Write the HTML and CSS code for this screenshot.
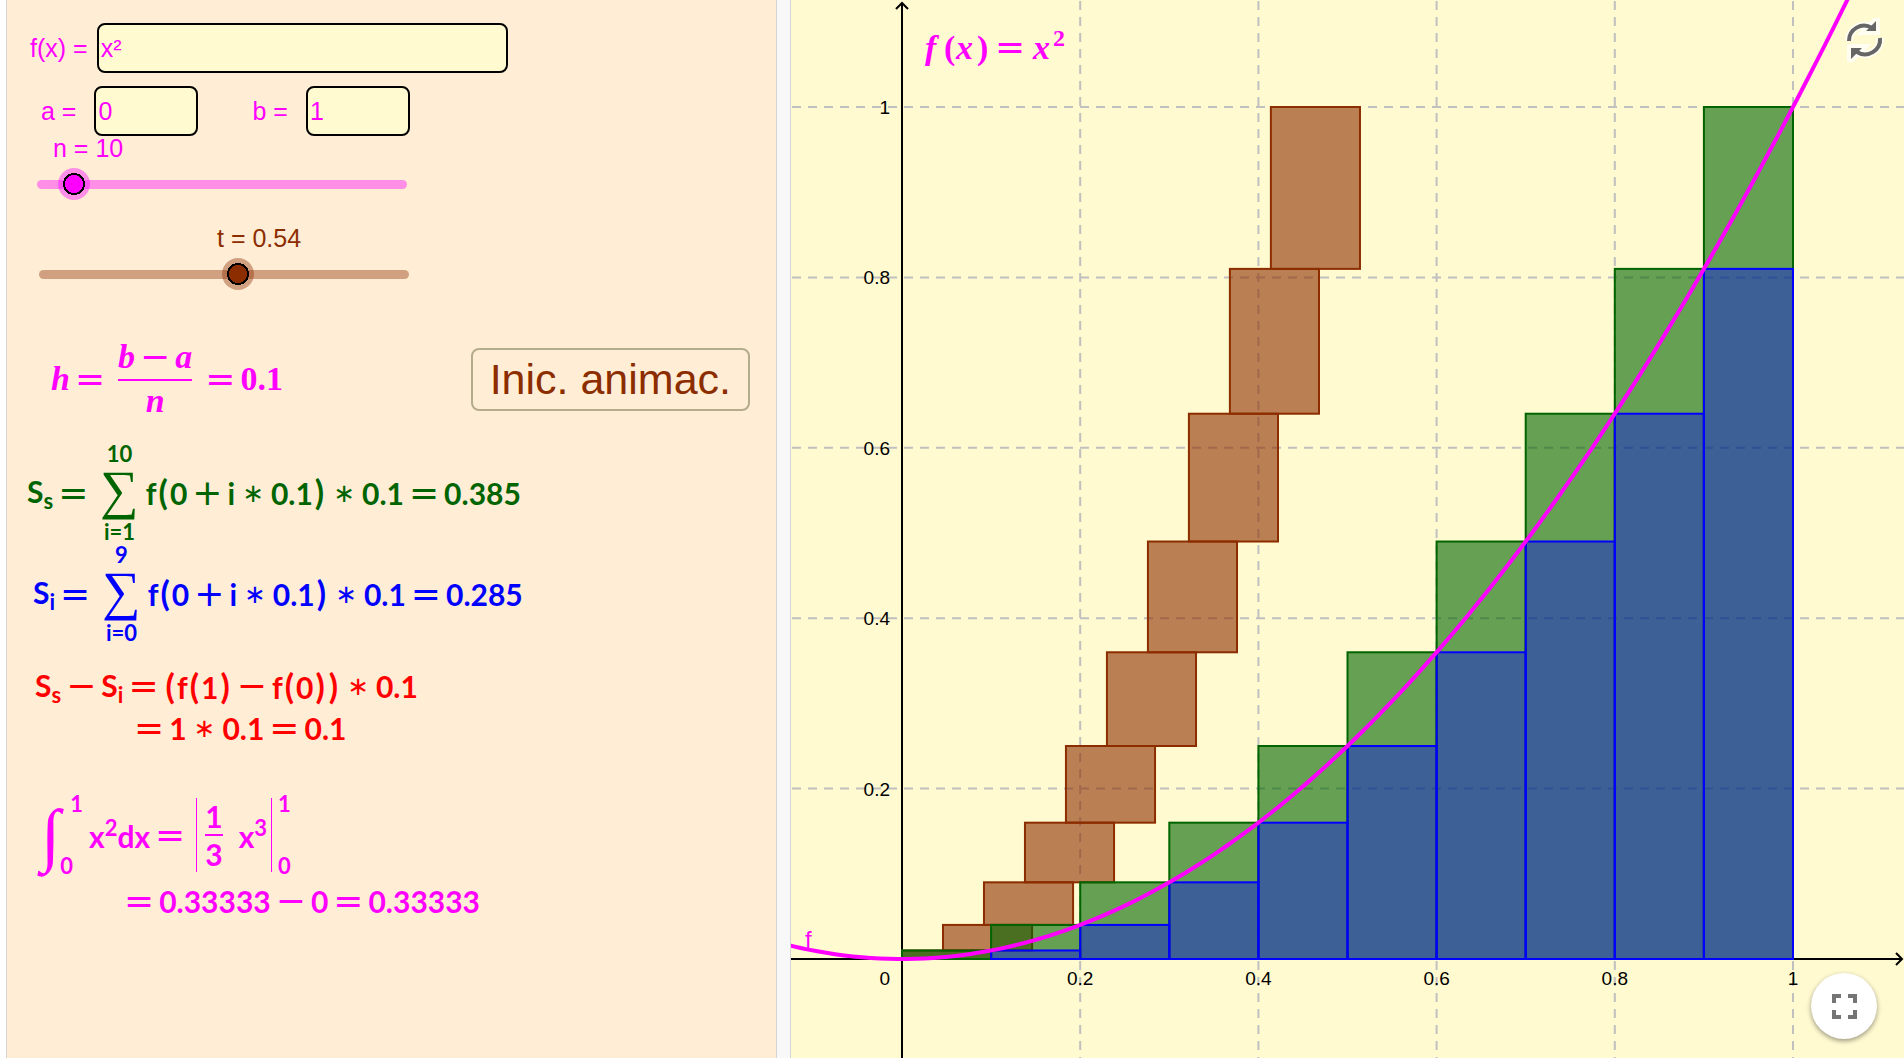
FILE: index.html
```html
<!DOCTYPE html>
<html lang="es">
<head>
    <meta charset="UTF-8">
    <meta name="viewport" content="width=device-width, initial-scale=1.0">
    <title>Sumas de Riemann</title>
    <link rel="stylesheet" href="styles.css">
</head>
<body>

<main class="applet">
    <section class="controls">
        <div class="row row-f">
            <label for="fx">f(x) =</label>
            <input type="text" id="fx" class="wide" value="x²">
        </div>
        <div class="row row-ab">
            <label for="a">a =</label>
            <input type="text" id="a" value="0">
            <label for="b" class="label-b">b =</label>
            <input type="text" id="b" value="1">
        </div>

        <div class="slider magenta">
            <label for="n" id="nLabel">n = 10</label>
            <div class="track"><input type="range" id="n" min="1" max="100" value="10"></div>
        </div>
        <div class="slider brown">
            <label for="t" id="tLabel">t = 0.54</label>
            <div class="track"><input type="range" id="t" min="0" max="1" step="0.01" value="0.54"></div>
        </div>

        <div class="step">
            <div class="math serif magenta">
                <i>h</i><span class="op">=</span>
                <span class="frac"><span><i>b</i><span class="op">−</span><i>a</i></span><i>n</i></span>
                <span class="op">=</span><span>0.1</span>
            </div>
            <button type="button" id="play">Inic. animac.</button>
        </div>

        <div class="math sum green">
            <span>S<sub>s</sub></span><span class="op">=</span>
            <span class="sigma"><small>10</small><span class="big">∑</span><small>i=1</small></span>
            <span>f<span class="par">(</span>0</span><span class="op">+</span><span>i</span><span class="op star">∗</span><span>0.1<span class="par">)</span></span><span class="op star">∗</span><span>0.1</span><span class="op">=</span><span>0.385</span>
        </div>
        <div class="math sum blue">
            <span>S<sub>i</sub></span><span class="op">=</span>
            <span class="sigma"><small>9</small><span class="big">∑</span><small>i=0</small></span>
            <span>f<span class="par">(</span>0</span><span class="op">+</span><span>i</span><span class="op star">∗</span><span>0.1<span class="par">)</span></span><span class="op star">∗</span><span>0.1</span><span class="op">=</span><span>0.285</span>
        </div>

        <div class="difference red">
            <div class="math">
                <span>S<sub>s</sub></span><span class="op">−</span><span>S<sub>i</sub></span><span class="op">=</span><span><span class="par">(</span>f<span class="par">(</span>1<span class="par">)</span></span><span class="op">−</span><span>f<span class="par">(</span>0<span class="par">)</span><span class="par">)</span></span><span class="op star">∗</span><span>0.1</span>
            </div>
            <div class="math second">
                <span class="op">=</span><span>1</span><span class="op star">∗</span><span>0.1</span><span class="op">=</span><span>0.1</span>
            </div>
        </div>

        <div class="integral magenta">
            <div class="math">
                <span class="int">∫</span>
                <span class="limits inner"><small>1</small><small>0</small></span>
                <span>x<sup>2</sup>dx</span><span class="op">=</span>
                <span class="bars"><span class="frac"><span>1</span><span>3</span></span><span>x<sup>3</sup></span></span>
                <span class="limits outer"><small>1</small><small>0</small></span>
            </div>
            <div class="math second">
                <span class="op">=</span><span>0.33333</span><span class="op">−</span><span>0</span><span class="op">=</span><span>0.33333</span>
            </div>
        </div>
    </section>

    <section class="graph">
        <svg id="plot" viewBox="0 0 1113 1058">
            <g id="grid" class="grid"></g>
            <g class="axes">
                <path d="M0 959H1111M1105 953l6 6-6 6"/>
                <path d="M111 1058V3M105 9l6-6 6 6"/>
            </g>
            <g id="ticks" class="ticks"></g>
            <g id="moved" class="rect-brown"></g>
            <g id="upper" class="rect-green"></g>
            <g id="lower" class="rect-blue"></g>
            <path id="curve" class="curve"/>
            <text class="curve-name" x="14" y="948">f</text>
            <text class="formula" y="59"><tspan x="134" class="it">f</tspan><tspan x="153">(</tspan><tspan x="165" class="it">x</tspan><tspan x="186">)</tspan><tspan x="204" class="equals">=</tspan><tspan x="242" class="it">x</tspan><tspan x="262" y="46" class="exp">2</tspan></text>
        </svg>
        <button type="button" class="reset" id="reset" aria-label="Reiniciar">
            <svg viewBox="0 0 40 44">
                <g class="halo"><path d="M5 23A15 15 0 0 1 28 10"/><path d="M36 20A15 15 0 0 1 13 34"/><path d="M32 3V13H22zM7 41V30H18z"/></g>
                <g class="arrows"><path d="M5 23A15 15 0 0 1 28 10"/><path d="M36 20A15 15 0 0 1 13 34"/></g>
                <path class="heads" d="M32 3V13H22zM7 41V30H18z"/>
            </svg>
        </button>
        <button type="button" class="fullscreen" aria-label="Pantalla completa">
            <svg viewBox="0 0 25 25"><path d="M2 9V2H9M16 2H23V9M23 16V23H16M9 23H2V16"/></svg>
        </button>
    </section>
</main>

<script>
    // Position of the origin and pixels per unit inside the SVG
    const originX = 111, originY = 959;
    const unitX = 891, unitY = 852;

    const nInput = document.getElementById('n');
    const tInput = document.getElementById('t');

    function px(x) { return originX + x * unitX; }
    function py(y) { return originY - y * unitY; }
    function f(x) { return x * x; }

    function rect(x, width, from, to) {
        return `<rect x="${px(x)}" y="${py(to)}" width="${width * unitX}" height="${(to - from) * unitY}"/>`;
    }

    function drawGrid() {
        let lines = '';
        let ticks = `<text x="99" y="985" class="end">0</text>`;
        for (let i = 1; i <= 5; i++) {
            const v = i / 5;
            lines += `<path d="M${px(v)} 1V1058M1 ${py(v)}H1113"/>`;
            ticks += `<text x="${px(v)}" y="985" class="mid">${v}</text>`;
            ticks += `<text x="99" y="${py(v) + 7}" class="end">${v}</text>`;
        }
        document.getElementById('grid').innerHTML = lines;
        document.getElementById('ticks').innerHTML = ticks;

        let d = '';
        for (let x = -0.125; x < 1.1; x += 0.01) {
            d += (d ? 'L' : 'M') + px(x) + ' ' + py(f(x));
        }
        document.getElementById('curve').setAttribute('d', d);
    }

    // The label travels with the slider handle
    function placeLabel(id, text, ratio) {
        const label = document.getElementById(id);
        label.innerText = text;
        label.style.marginLeft = Math.round(ratio * 362 - 5) + 'px';
    }

    function draw() {
        const n = parseInt(nInput.value);
        const t = parseFloat(tInput.value);
        const h = 1 / n;
        let upper = '', lower = '', moved = '';
        for (let i = 0; i < n; i++) {
            const x = i * h;
            upper += rect(x, h, 0, f(x + h));
            lower += rect(x, h, 0, f(x));
            moved += rect(x * (1 - t), h, f(x), f(x + h));
        }
        document.getElementById('upper').innerHTML = upper;
        document.getElementById('lower').innerHTML = lower;
        document.getElementById('moved').innerHTML = moved;
        placeLabel('nLabel', 'n = ' + n, (n - 1) / 99);
        placeLabel('tLabel', 't = ' + t, t);
    }

    let timer = null;
    document.getElementById('play').onclick = function () {
        if (timer) {
            clearInterval(timer);
            timer = null;
            return;
        }
        timer = setInterval(function () {
            tInput.value = (parseFloat(tInput.value) + 0.01) % 1;
            draw();
        }, 50);
    };
    document.getElementById('reset').onclick = function () { location.reload(); };
    nInput.oninput = draw;
    tInput.oninput = draw;

    drawGrid();
    draw();
</script>
</body>
</html>
```
FILE: styles.css
```css
* {
    box-sizing: border-box;
}
body {
    margin: 0;
    background: #fff;
    font-family: "Liberation Sans", Arial, sans-serif;
}
.applet {
    display: grid;
    grid-template-columns: minmax(0, 771fr) minmax(0, 1114fr);
    gap: 13px;
    min-height: 100vh;
    margin-left: 6px;
    background: #f8f8f8;
}
.magenta { color: #ff00ff; }
.brown { color: #8c2d00; }
.green { color: #006400; }
.blue { color: #0000ff; }
.red { color: #ff0000; }

/* Left panel */
.controls {
    padding: 23px 26px 0 16px;
    background: #ffedd6;
    border: 1px solid #d3d3d8;
    border-width: 0 1px;
    font-size: 25px;
}
.row {
    display: flex;
    align-items: center;
    color: #ff00ff;
}
.row label {
    white-space: nowrap;
}
.row-f {
    gap: 9px;
    padding-left: 7px;
}
.row-ab {
    gap: 18px;
    margin-top: 13px;
    padding-left: 18px;
}
.label-b {
    margin-left: 36px;
}
.row input {
    width: 104px;
    height: 50px;
    padding: 0 2px;
    border: 2px solid #000;
    border-radius: 8px;
    background: #fffad0;
    color: inherit;
    font: inherit;
}
.row input.wide {
    width: 411px;
}
.slider {
    width: 394px;
    margin-left: 2px;
}
.slider.brown {
    margin-top: 26px;
    margin-left: 4px;
}
.slider label {
    display: block;
    width: max-content;
    line-height: 24px;
}
.track {
    position: relative;
    height: 32px;
    margin-top: 8px;
}
.track::before {
    content: "";
    position: absolute;
    inset: 12px 12px 11px;
    border-radius: 5px;
    background: currentColor;
    opacity: 0.4;
}
.track input {
    position: relative;
    display: block;
    width: 100%;
    height: 32px;
    margin: 0;
    appearance: none;
    background: none;
    color: inherit;
}
.track input::-webkit-slider-thumb {
    appearance: none;
    width: 32px;
    height: 32px;
    border-radius: 50%;
    background: radial-gradient(circle, currentColor 9px, #000 9px, #000 11px, color-mix(in srgb, currentColor 40%, transparent) 11px);
}

/* Formulas */
.step {
    display: flex;
    align-items: center;
    justify-content: space-between;
    height: 90px;
    margin-top: 44px;
    padding-left: 28px;
}
.step button {
    height: 63px;
    padding: 0 17px;
    border: 2px solid #b3ad8c;
    border-radius: 8px;
    background: none;
    color: #8c2d00;
    font-family: inherit;
    font-size: 43px;
}
.math {
    display: flex;
    align-items: center;
    font-family: Lato, sans-serif;
    font-size: 30px;
    font-weight: bold;
    line-height: 36px;
    white-space: nowrap;
}
.math.serif {
    font-family: "Liberation Serif", serif;
    font-size: 34px;
}
.op {
    margin: 0 5px;
    font-family: "DejaVu Sans", sans-serif;
    font-size: 36px;
    font-weight: normal;
}
.star {
    margin: 0 7px;
    font-size: 26px;
}
.par {
    margin: 0 2px;
    font-size: 34px;
}
.math sub,
.math sup,
.math small {
    font-size: 22px;
    line-height: 22px;
}
.math sub {
    vertical-align: -6px;
}
.math sup {
    vertical-align: 12px;
}
.frac {
    display: flex;
    flex-direction: column;
    align-items: center;
}
.frac > :first-child {
    border-bottom: 2px solid;
}
.serif .frac {
    margin: 0 8px;
}
.serif .frac > :first-child {
    display: flex;
    padding-bottom: 4px;
}
.serif .frac > :last-child {
    padding-top: 2px;
}
.sum {
    height: 101px;
    padding-left: 4px;
}
.sum.green {
    margin-top: 18px;
}
.sum.blue {
    padding-left: 10px;
}
.sigma {
    display: flex;
    flex-direction: column;
    align-items: center;
    margin: 0 7px;
}
.sigma .big {
    padding-bottom: 6px;
    font-family: "Liberation Serif", serif;
    font-size: 54px;
    font-weight: normal;
    line-height: 50px;
}
.difference {
    margin-top: 21px;
    padding-left: 12px;
}
.difference .math {
    height: 42px;
}
.difference .second {
    padding-left: 94px;
}
.integral {
    margin-top: 44px;
    padding-left: 18px;
}
.int {
    font-family: "Liberation Serif", serif;
    font-size: 70px;
    font-style: italic;
    font-weight: normal;
    line-height: 80px;
}
.limits {
    display: flex;
    flex-direction: column;
    justify-content: space-between;
    height: 84px;
}
.limits.inner {
    margin-right: 6px;
}
.limits.inner :first-child {
    padding-left: 10px;
}
.limits.outer {
    margin-left: 6px;
}
.bars {
    display: flex;
    align-items: center;
    gap: 16px;
    margin-left: 6px;
    padding: 0 4px 0 8px;
    border: solid;
    border-width: 0 1px;
}
.integral .second {
    height: 48px;
    padding-left: 78px;
}

/* Graph */
.graph {
    position: relative;
    border-left: 1px solid #d3d3d8;
    background: #fffad0;
}
#plot {
    display: block;
    width: 100%;
}
.grid {
    fill: none;
    stroke: #c0c0c0;
    stroke-width: 2;
    stroke-dasharray: 9 7;
}
.axes {
    fill: none;
    stroke: #000;
    stroke-width: 2;
}
.ticks {
    font-size: 19px;
}
.mid { text-anchor: middle; }
.end { text-anchor: end; }
.rect-brown {
    fill: rgba(140, 45, 0, 0.6);
    stroke: #8c2d00;
    stroke-width: 2;
}
.rect-green {
    fill: rgba(0, 100, 0, 0.6);
    stroke: #006400;
    stroke-width: 2;
}
.rect-blue {
    fill: rgba(0, 0, 255, 0.4);
    stroke: #0000ff;
    stroke-width: 2;
}
.curve {
    fill: none;
    stroke: #ff00ff;
    stroke-width: 4;
}
.curve-name {
    fill: #ff00ff;
    font-size: 24px;
}
.formula {
    fill: #ff00ff;
    font-family: "Liberation Serif", serif;
    font-size: 34px;
    font-weight: bold;
}
.formula .it {
    font-style: italic;
}
.formula .equals {
    font-family: "DejaVu Sans", sans-serif;
    font-size: 36px;
    font-weight: normal;
}
.formula .exp {
    font-size: 24px;
}
.reset,
.fullscreen {
    position: absolute;
    padding: 0;
    border: none;
    background: none;
    cursor: pointer;
}
.reset {
    top: 18px;
    right: 20px;
    width: 40px;
    height: 44px;
}
.reset svg {
    display: block;
}
.reset path {
    fill: none;
    stroke: #666;
    stroke-width: 4;
}
.reset .halo path {
    stroke: #fff;
    stroke-width: 8;
    opacity: 0.7;
}
.reset path.heads {
    fill: #666;
    stroke: none;
}
.fullscreen {
    right: 27px;
    bottom: 19px;
    display: flex;
    align-items: center;
    justify-content: center;
    width: 66px;
    height: 66px;
    border-radius: 50%;
    background: #fff;
    box-shadow: 0 2px 5px rgba(0, 0, 0, 0.4);
}
.fullscreen svg {
    width: 25px;
    fill: none;
    stroke: #757575;
    stroke-width: 4;
}
```
